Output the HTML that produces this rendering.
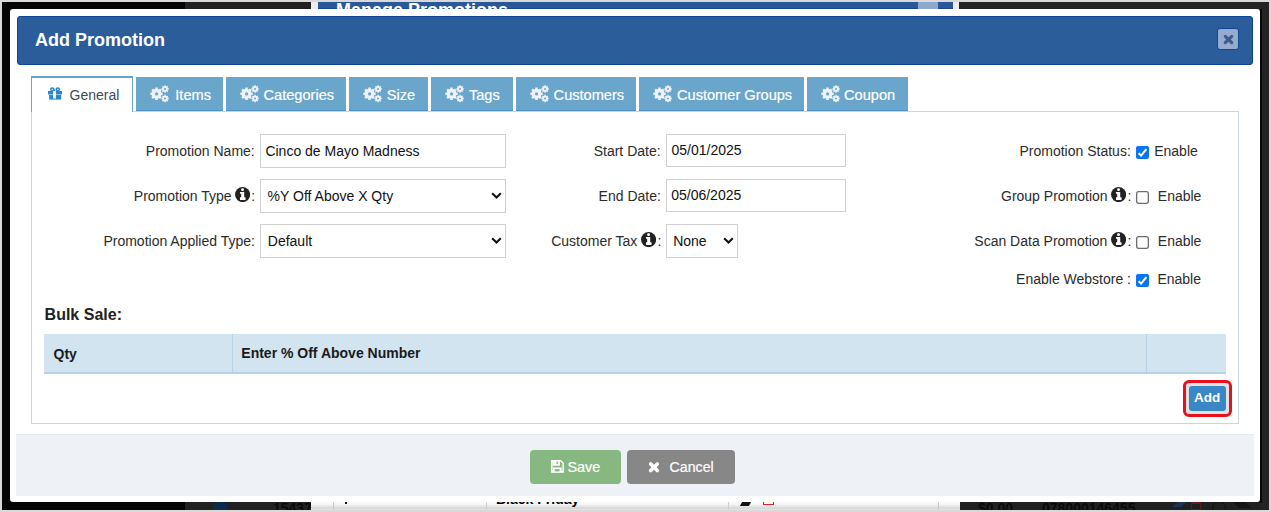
<!DOCTYPE html>
<html><head><meta charset="utf-8">
<style>
*{box-sizing:border-box;margin:0;padding:0}
html,body{width:1271px;height:512px;overflow:hidden}
body{background:#d9d9d9;font-family:"Liberation Sans",sans-serif;font-size:14px;color:#2b2b2b;position:relative}
.a{position:absolute}
.t{position:absolute;white-space:nowrap;line-height:1}
#bg{left:2px;top:2px;width:1267px;height:508px;background:#050505}
#modal{left:10px;top:9px;width:1250px;height:493px;background:#fff;border-radius:3px}
#hdr{left:17px;top:16px;width:1236px;height:49px;background:#2a5d9a;border:1px solid #0d4494;border-radius:3px}
#close{left:1217px;top:28px;width:22px;height:22px;background:#93acd0;border:1px solid #104892;border-radius:3px}
.tab{position:absolute;top:77px;height:34px;background:#6aa5cc;border-bottom:1px solid #4d90c8}
#gen{left:31px;top:76px;width:102px;height:36px;background:#fff;border:1px solid #68a4d4;border-top:2px solid #65a1d5;border-bottom:none}
#panel{left:31px;top:111px;width:1208px;height:313px;border:1px solid #c8d4e1}
.inp{position:absolute;height:34px;border:1px solid #d0d0d0;background:#fff}
#footer{left:16px;top:434px;width:1238px;height:62px;background:#eef1f6;border-top:1px solid #e3e8ef}
</style></head><body>
<div id="bg" class="a"></div>
<div class="a" style="left:185px;top:2px;width:126px;height:7px;background:#212121"></div>
<div class="a" style="left:959px;top:2px;width:310px;height:508px;background:#232323"></div>
<div class="a" style="left:1260px;top:9px;width:2px;height:494px;background:#080808"></div>
<div class="a" style="left:311px;top:2px;width:648px;height:7px;background:#ececec;overflow:hidden">
 <div class="a" style="left:7px;top:0;width:635px;height:7px;background:#28589a;border-bottom:1px solid #1b4a8c"></div>
 <div class="t" style="left:25px;top:-1px;font-size:18px;font-weight:bold;color:#fff">Manage Promotions</div>
 <div class="a" style="left:607px;top:0;width:20px;height:7px;background:#8fa9cc"></div>
</div>
<div class="a" style="left:185px;top:501px;width:126px;height:9px;background:#212121;overflow:hidden">
 <div class="a" style="left:28px;top:0;width:15px;height:15px;border-radius:50%;background:#0c2a4c"></div>
 <div class="t" style="left:88px;top:0px;font-weight:bold;color:#0a0a0a;font-size:14px">15437</div>
</div>
<div class="a" style="left:311px;top:501px;width:649px;height:9px;background:linear-gradient(#fdfdfd,#f4f4f4 40%,#d6d6d6 80%,#e6e6e6);overflow:hidden">
 <div class="a" style="left:22px;top:0;width:1px;height:9px;background:#c8c8c8"></div>
 <div class="a" style="left:175px;top:0;width:1px;height:9px;background:#d0d0d0"></div>
 <div class="a" style="left:417px;top:0;width:1px;height:9px;background:#d0d0d0"></div>
 <div class="a" style="left:627px;top:0;width:1px;height:9px;background:#c8c8c8"></div>
 <div class="a" style="left:34px;top:1px;width:2px;height:2px;background:#111"></div>
 <div class="t" style="left:185px;top:-9px;font-weight:bold;color:#000;font-size:14px">Black Friday</div>
 <div class="a" style="left:430px;top:1px;width:9px;height:4px;background:#111;transform:skewX(-30deg)"></div>
 <div class="a" style="left:452px;top:0;width:11px;height:4px;border:1.5px solid #d22;border-top:none"></div>
</div>
<div class="a" style="left:960px;top:501px;width:300px;height:9px;background:#202020;overflow:hidden">
 <div class="t" style="left:18px;top:0px;font-weight:bold;color:#0a0a0a;font-size:14px">$0.00</div>
 <div class="t" style="left:82px;top:0px;font-weight:bold;color:#0a0a0a;font-size:14px">078000146455</div>
 <div class="a" style="left:215px;top:1px;width:9px;height:5px;background:#1b3358;transform:skewX(-45deg)"></div>
 <div class="a" style="left:231px;top:1px;width:10px;height:8px;border:1.5px solid #5a1a1a;border-top:2px solid #6a1a1a"></div>
 <div class="a" style="left:252px;top:0px;width:14px;height:14px;border:1.5px solid #111;border-radius:50%"></div><div class="a" style="left:276px;top:1px;width:12px;height:6px;background:#151515;transform:skewX(45deg)"></div>
</div>
<div id="modal" class="a"></div>
<div id="hdr" class="a"></div>
<div id="close" class="a"></div>
<svg class="a" style="left:1223px;top:34px" width="11" height="11" viewBox="0 0 11 11"><path d="M2.3 2.3L8.7 8.7M8.7 2.3L2.3 8.7" stroke="#3d5d87" stroke-width="3.1" stroke-linecap="round"/></svg>

<div id="panel" class="a"></div>
<div id="gen" class="a"></div>
<svg class="a" style="left:47.8px;top:87px" width="15" height="13" viewBox="0 0 15 13"><g fill="#2c87d0"><rect x="0" y="4.0" width="14.1" height="3.4"/><rect x="1.1" y="7.8" width="12.1" height="4.8"/></g><rect x="5.1" y="4.0" width="2.8" height="7.5" fill="#fff"/><g fill="none" stroke="#2c87d0" stroke-width="1.5"><ellipse cx="4.3" cy="2.3" rx="1.6" ry="1.3"/><ellipse cx="9.8" cy="2.3" rx="1.6" ry="1.3"/></g><rect x="6" y="2.6" width="1.2" height="1.4" fill="#2c87d0"/></svg>
<div class="tab" style="left:136px;width:87px"></div><svg class="a" style="left:150px;top:85px" width="20" height="18" viewBox="0 0 20 18"><path fill="#eef2f6" fill-rule="evenodd" d="M11.33,7.52 L12.68,7.57 L12.68,10.03 L11.33,10.08 L10.82,11.31 L11.74,12.30 L10.00,14.04 L9.01,13.12 L7.78,13.63 L7.73,14.98 L5.27,14.98 L5.22,13.63 L3.99,13.12 L3.00,14.04 L1.26,12.30 L2.18,11.31 L1.67,10.08 L0.32,10.03 L0.32,7.57 L1.67,7.52 L2.18,6.29 L1.26,5.30 L3.00,3.56 L3.99,4.48 L5.22,3.97 L5.27,2.62 L7.73,2.62 L7.78,3.97 L9.01,4.48 L10.00,3.56 L11.74,5.30 L10.82,6.29ZM5.00,8.90a1.6,1.6 0 1,0 3.2,0a1.6,1.6 0 1,0 -3.2,0ZM17.90,3.26 L18.83,3.26 L18.83,4.74 L17.90,4.74 L17.61,5.46 L18.26,6.11 L17.21,7.16 L16.56,6.51 L15.84,6.80 L15.84,7.73 L14.36,7.73 L14.36,6.80 L13.64,6.51 L12.99,7.16 L11.94,6.11 L12.59,5.46 L12.30,4.74 L11.37,4.74 L11.37,3.26 L12.30,3.26 L12.59,2.54 L11.94,1.89 L12.99,0.84 L13.64,1.49 L14.36,1.20 L14.36,0.27 L15.84,0.27 L15.84,1.20 L16.56,1.49 L17.21,0.84 L18.26,1.89 L17.61,2.54ZM14.00,4.00a1.0,1.0 0 1,0 2.0,0a1.0,1.0 0 1,0 -2.0,0ZM17.90,12.86 L18.83,12.86 L18.83,14.34 L17.90,14.34 L17.61,15.06 L18.26,15.71 L17.21,16.76 L16.56,16.11 L15.84,16.40 L15.84,17.33 L14.36,17.33 L14.36,16.40 L13.64,16.11 L12.99,16.76 L11.94,15.71 L12.59,15.06 L12.30,14.34 L11.37,14.34 L11.37,12.86 L12.30,12.86 L12.59,12.14 L11.94,11.49 L12.99,10.44 L13.64,11.09 L14.36,10.80 L14.36,9.87 L15.84,9.87 L15.84,10.80 L16.56,11.09 L17.21,10.44 L18.26,11.49 L17.61,12.14ZM14.00,13.60a1.0,1.0 0 1,0 2.0,0a1.0,1.0 0 1,0 -2.0,0Z"/></svg><div class="tab" style="left:226px;width:120px"></div><svg class="a" style="left:240px;top:85px" width="20" height="18" viewBox="0 0 20 18"><path fill="#eef2f6" fill-rule="evenodd" d="M11.33,7.52 L12.68,7.57 L12.68,10.03 L11.33,10.08 L10.82,11.31 L11.74,12.30 L10.00,14.04 L9.01,13.12 L7.78,13.63 L7.73,14.98 L5.27,14.98 L5.22,13.63 L3.99,13.12 L3.00,14.04 L1.26,12.30 L2.18,11.31 L1.67,10.08 L0.32,10.03 L0.32,7.57 L1.67,7.52 L2.18,6.29 L1.26,5.30 L3.00,3.56 L3.99,4.48 L5.22,3.97 L5.27,2.62 L7.73,2.62 L7.78,3.97 L9.01,4.48 L10.00,3.56 L11.74,5.30 L10.82,6.29ZM5.00,8.90a1.6,1.6 0 1,0 3.2,0a1.6,1.6 0 1,0 -3.2,0ZM17.90,3.26 L18.83,3.26 L18.83,4.74 L17.90,4.74 L17.61,5.46 L18.26,6.11 L17.21,7.16 L16.56,6.51 L15.84,6.80 L15.84,7.73 L14.36,7.73 L14.36,6.80 L13.64,6.51 L12.99,7.16 L11.94,6.11 L12.59,5.46 L12.30,4.74 L11.37,4.74 L11.37,3.26 L12.30,3.26 L12.59,2.54 L11.94,1.89 L12.99,0.84 L13.64,1.49 L14.36,1.20 L14.36,0.27 L15.84,0.27 L15.84,1.20 L16.56,1.49 L17.21,0.84 L18.26,1.89 L17.61,2.54ZM14.00,4.00a1.0,1.0 0 1,0 2.0,0a1.0,1.0 0 1,0 -2.0,0ZM17.90,12.86 L18.83,12.86 L18.83,14.34 L17.90,14.34 L17.61,15.06 L18.26,15.71 L17.21,16.76 L16.56,16.11 L15.84,16.40 L15.84,17.33 L14.36,17.33 L14.36,16.40 L13.64,16.11 L12.99,16.76 L11.94,15.71 L12.59,15.06 L12.30,14.34 L11.37,14.34 L11.37,12.86 L12.30,12.86 L12.59,12.14 L11.94,11.49 L12.99,10.44 L13.64,11.09 L14.36,10.80 L14.36,9.87 L15.84,9.87 L15.84,10.80 L16.56,11.09 L17.21,10.44 L18.26,11.49 L17.61,12.14ZM14.00,13.60a1.0,1.0 0 1,0 2.0,0a1.0,1.0 0 1,0 -2.0,0Z"/></svg><div class="tab" style="left:349px;width:79px"></div><svg class="a" style="left:363px;top:85px" width="20" height="18" viewBox="0 0 20 18"><path fill="#eef2f6" fill-rule="evenodd" d="M11.33,7.52 L12.68,7.57 L12.68,10.03 L11.33,10.08 L10.82,11.31 L11.74,12.30 L10.00,14.04 L9.01,13.12 L7.78,13.63 L7.73,14.98 L5.27,14.98 L5.22,13.63 L3.99,13.12 L3.00,14.04 L1.26,12.30 L2.18,11.31 L1.67,10.08 L0.32,10.03 L0.32,7.57 L1.67,7.52 L2.18,6.29 L1.26,5.30 L3.00,3.56 L3.99,4.48 L5.22,3.97 L5.27,2.62 L7.73,2.62 L7.78,3.97 L9.01,4.48 L10.00,3.56 L11.74,5.30 L10.82,6.29ZM5.00,8.90a1.6,1.6 0 1,0 3.2,0a1.6,1.6 0 1,0 -3.2,0ZM17.90,3.26 L18.83,3.26 L18.83,4.74 L17.90,4.74 L17.61,5.46 L18.26,6.11 L17.21,7.16 L16.56,6.51 L15.84,6.80 L15.84,7.73 L14.36,7.73 L14.36,6.80 L13.64,6.51 L12.99,7.16 L11.94,6.11 L12.59,5.46 L12.30,4.74 L11.37,4.74 L11.37,3.26 L12.30,3.26 L12.59,2.54 L11.94,1.89 L12.99,0.84 L13.64,1.49 L14.36,1.20 L14.36,0.27 L15.84,0.27 L15.84,1.20 L16.56,1.49 L17.21,0.84 L18.26,1.89 L17.61,2.54ZM14.00,4.00a1.0,1.0 0 1,0 2.0,0a1.0,1.0 0 1,0 -2.0,0ZM17.90,12.86 L18.83,12.86 L18.83,14.34 L17.90,14.34 L17.61,15.06 L18.26,15.71 L17.21,16.76 L16.56,16.11 L15.84,16.40 L15.84,17.33 L14.36,17.33 L14.36,16.40 L13.64,16.11 L12.99,16.76 L11.94,15.71 L12.59,15.06 L12.30,14.34 L11.37,14.34 L11.37,12.86 L12.30,12.86 L12.59,12.14 L11.94,11.49 L12.99,10.44 L13.64,11.09 L14.36,10.80 L14.36,9.87 L15.84,9.87 L15.84,10.80 L16.56,11.09 L17.21,10.44 L18.26,11.49 L17.61,12.14ZM14.00,13.60a1.0,1.0 0 1,0 2.0,0a1.0,1.0 0 1,0 -2.0,0Z"/></svg><div class="tab" style="left:431px;width:82px"></div><svg class="a" style="left:445px;top:85px" width="20" height="18" viewBox="0 0 20 18"><path fill="#eef2f6" fill-rule="evenodd" d="M11.33,7.52 L12.68,7.57 L12.68,10.03 L11.33,10.08 L10.82,11.31 L11.74,12.30 L10.00,14.04 L9.01,13.12 L7.78,13.63 L7.73,14.98 L5.27,14.98 L5.22,13.63 L3.99,13.12 L3.00,14.04 L1.26,12.30 L2.18,11.31 L1.67,10.08 L0.32,10.03 L0.32,7.57 L1.67,7.52 L2.18,6.29 L1.26,5.30 L3.00,3.56 L3.99,4.48 L5.22,3.97 L5.27,2.62 L7.73,2.62 L7.78,3.97 L9.01,4.48 L10.00,3.56 L11.74,5.30 L10.82,6.29ZM5.00,8.90a1.6,1.6 0 1,0 3.2,0a1.6,1.6 0 1,0 -3.2,0ZM17.90,3.26 L18.83,3.26 L18.83,4.74 L17.90,4.74 L17.61,5.46 L18.26,6.11 L17.21,7.16 L16.56,6.51 L15.84,6.80 L15.84,7.73 L14.36,7.73 L14.36,6.80 L13.64,6.51 L12.99,7.16 L11.94,6.11 L12.59,5.46 L12.30,4.74 L11.37,4.74 L11.37,3.26 L12.30,3.26 L12.59,2.54 L11.94,1.89 L12.99,0.84 L13.64,1.49 L14.36,1.20 L14.36,0.27 L15.84,0.27 L15.84,1.20 L16.56,1.49 L17.21,0.84 L18.26,1.89 L17.61,2.54ZM14.00,4.00a1.0,1.0 0 1,0 2.0,0a1.0,1.0 0 1,0 -2.0,0ZM17.90,12.86 L18.83,12.86 L18.83,14.34 L17.90,14.34 L17.61,15.06 L18.26,15.71 L17.21,16.76 L16.56,16.11 L15.84,16.40 L15.84,17.33 L14.36,17.33 L14.36,16.40 L13.64,16.11 L12.99,16.76 L11.94,15.71 L12.59,15.06 L12.30,14.34 L11.37,14.34 L11.37,12.86 L12.30,12.86 L12.59,12.14 L11.94,11.49 L12.99,10.44 L13.64,11.09 L14.36,10.80 L14.36,9.87 L15.84,9.87 L15.84,10.80 L16.56,11.09 L17.21,10.44 L18.26,11.49 L17.61,12.14ZM14.00,13.60a1.0,1.0 0 1,0 2.0,0a1.0,1.0 0 1,0 -2.0,0Z"/></svg><div class="tab" style="left:516px;width:120px"></div><svg class="a" style="left:530px;top:85px" width="20" height="18" viewBox="0 0 20 18"><path fill="#eef2f6" fill-rule="evenodd" d="M11.33,7.52 L12.68,7.57 L12.68,10.03 L11.33,10.08 L10.82,11.31 L11.74,12.30 L10.00,14.04 L9.01,13.12 L7.78,13.63 L7.73,14.98 L5.27,14.98 L5.22,13.63 L3.99,13.12 L3.00,14.04 L1.26,12.30 L2.18,11.31 L1.67,10.08 L0.32,10.03 L0.32,7.57 L1.67,7.52 L2.18,6.29 L1.26,5.30 L3.00,3.56 L3.99,4.48 L5.22,3.97 L5.27,2.62 L7.73,2.62 L7.78,3.97 L9.01,4.48 L10.00,3.56 L11.74,5.30 L10.82,6.29ZM5.00,8.90a1.6,1.6 0 1,0 3.2,0a1.6,1.6 0 1,0 -3.2,0ZM17.90,3.26 L18.83,3.26 L18.83,4.74 L17.90,4.74 L17.61,5.46 L18.26,6.11 L17.21,7.16 L16.56,6.51 L15.84,6.80 L15.84,7.73 L14.36,7.73 L14.36,6.80 L13.64,6.51 L12.99,7.16 L11.94,6.11 L12.59,5.46 L12.30,4.74 L11.37,4.74 L11.37,3.26 L12.30,3.26 L12.59,2.54 L11.94,1.89 L12.99,0.84 L13.64,1.49 L14.36,1.20 L14.36,0.27 L15.84,0.27 L15.84,1.20 L16.56,1.49 L17.21,0.84 L18.26,1.89 L17.61,2.54ZM14.00,4.00a1.0,1.0 0 1,0 2.0,0a1.0,1.0 0 1,0 -2.0,0ZM17.90,12.86 L18.83,12.86 L18.83,14.34 L17.90,14.34 L17.61,15.06 L18.26,15.71 L17.21,16.76 L16.56,16.11 L15.84,16.40 L15.84,17.33 L14.36,17.33 L14.36,16.40 L13.64,16.11 L12.99,16.76 L11.94,15.71 L12.59,15.06 L12.30,14.34 L11.37,14.34 L11.37,12.86 L12.30,12.86 L12.59,12.14 L11.94,11.49 L12.99,10.44 L13.64,11.09 L14.36,10.80 L14.36,9.87 L15.84,9.87 L15.84,10.80 L16.56,11.09 L17.21,10.44 L18.26,11.49 L17.61,12.14ZM14.00,13.60a1.0,1.0 0 1,0 2.0,0a1.0,1.0 0 1,0 -2.0,0Z"/></svg><div class="tab" style="left:639px;width:165px"></div><svg class="a" style="left:653px;top:85px" width="20" height="18" viewBox="0 0 20 18"><path fill="#eef2f6" fill-rule="evenodd" d="M11.33,7.52 L12.68,7.57 L12.68,10.03 L11.33,10.08 L10.82,11.31 L11.74,12.30 L10.00,14.04 L9.01,13.12 L7.78,13.63 L7.73,14.98 L5.27,14.98 L5.22,13.63 L3.99,13.12 L3.00,14.04 L1.26,12.30 L2.18,11.31 L1.67,10.08 L0.32,10.03 L0.32,7.57 L1.67,7.52 L2.18,6.29 L1.26,5.30 L3.00,3.56 L3.99,4.48 L5.22,3.97 L5.27,2.62 L7.73,2.62 L7.78,3.97 L9.01,4.48 L10.00,3.56 L11.74,5.30 L10.82,6.29ZM5.00,8.90a1.6,1.6 0 1,0 3.2,0a1.6,1.6 0 1,0 -3.2,0ZM17.90,3.26 L18.83,3.26 L18.83,4.74 L17.90,4.74 L17.61,5.46 L18.26,6.11 L17.21,7.16 L16.56,6.51 L15.84,6.80 L15.84,7.73 L14.36,7.73 L14.36,6.80 L13.64,6.51 L12.99,7.16 L11.94,6.11 L12.59,5.46 L12.30,4.74 L11.37,4.74 L11.37,3.26 L12.30,3.26 L12.59,2.54 L11.94,1.89 L12.99,0.84 L13.64,1.49 L14.36,1.20 L14.36,0.27 L15.84,0.27 L15.84,1.20 L16.56,1.49 L17.21,0.84 L18.26,1.89 L17.61,2.54ZM14.00,4.00a1.0,1.0 0 1,0 2.0,0a1.0,1.0 0 1,0 -2.0,0ZM17.90,12.86 L18.83,12.86 L18.83,14.34 L17.90,14.34 L17.61,15.06 L18.26,15.71 L17.21,16.76 L16.56,16.11 L15.84,16.40 L15.84,17.33 L14.36,17.33 L14.36,16.40 L13.64,16.11 L12.99,16.76 L11.94,15.71 L12.59,15.06 L12.30,14.34 L11.37,14.34 L11.37,12.86 L12.30,12.86 L12.59,12.14 L11.94,11.49 L12.99,10.44 L13.64,11.09 L14.36,10.80 L14.36,9.87 L15.84,9.87 L15.84,10.80 L16.56,11.09 L17.21,10.44 L18.26,11.49 L17.61,12.14ZM14.00,13.60a1.0,1.0 0 1,0 2.0,0a1.0,1.0 0 1,0 -2.0,0Z"/></svg><div class="tab" style="left:807px;width:101px"></div><svg class="a" style="left:821px;top:85px" width="20" height="18" viewBox="0 0 20 18"><path fill="#eef2f6" fill-rule="evenodd" d="M11.33,7.52 L12.68,7.57 L12.68,10.03 L11.33,10.08 L10.82,11.31 L11.74,12.30 L10.00,14.04 L9.01,13.12 L7.78,13.63 L7.73,14.98 L5.27,14.98 L5.22,13.63 L3.99,13.12 L3.00,14.04 L1.26,12.30 L2.18,11.31 L1.67,10.08 L0.32,10.03 L0.32,7.57 L1.67,7.52 L2.18,6.29 L1.26,5.30 L3.00,3.56 L3.99,4.48 L5.22,3.97 L5.27,2.62 L7.73,2.62 L7.78,3.97 L9.01,4.48 L10.00,3.56 L11.74,5.30 L10.82,6.29ZM5.00,8.90a1.6,1.6 0 1,0 3.2,0a1.6,1.6 0 1,0 -3.2,0ZM17.90,3.26 L18.83,3.26 L18.83,4.74 L17.90,4.74 L17.61,5.46 L18.26,6.11 L17.21,7.16 L16.56,6.51 L15.84,6.80 L15.84,7.73 L14.36,7.73 L14.36,6.80 L13.64,6.51 L12.99,7.16 L11.94,6.11 L12.59,5.46 L12.30,4.74 L11.37,4.74 L11.37,3.26 L12.30,3.26 L12.59,2.54 L11.94,1.89 L12.99,0.84 L13.64,1.49 L14.36,1.20 L14.36,0.27 L15.84,0.27 L15.84,1.20 L16.56,1.49 L17.21,0.84 L18.26,1.89 L17.61,2.54ZM14.00,4.00a1.0,1.0 0 1,0 2.0,0a1.0,1.0 0 1,0 -2.0,0ZM17.90,12.86 L18.83,12.86 L18.83,14.34 L17.90,14.34 L17.61,15.06 L18.26,15.71 L17.21,16.76 L16.56,16.11 L15.84,16.40 L15.84,17.33 L14.36,17.33 L14.36,16.40 L13.64,16.11 L12.99,16.76 L11.94,15.71 L12.59,15.06 L12.30,14.34 L11.37,14.34 L11.37,12.86 L12.30,12.86 L12.59,12.14 L11.94,11.49 L12.99,10.44 L13.64,11.09 L14.36,10.80 L14.36,9.87 L15.84,9.87 L15.84,10.80 L16.56,11.09 L17.21,10.44 L18.26,11.49 L17.61,12.14ZM14.00,13.60a1.0,1.0 0 1,0 2.0,0a1.0,1.0 0 1,0 -2.0,0Z"/></svg>

<div class="inp" style="left:260px;top:134px;width:246px"></div>
<div class="inp" style="left:260px;top:179px;width:246px"></div>
<svg class="a" style="left:490.5px;top:192.3px" width="11" height="8" viewBox="0 0 11 8"><path d="M1.2 1.2L5.5 5.5L9.8 1.2" fill="none" stroke="#111" stroke-width="2.1"/></svg>
<div class="inp" style="left:260px;top:224px;width:246px"></div>
<svg class="a" style="left:490.5px;top:237.3px" width="11" height="8" viewBox="0 0 11 8"><path d="M1.2 1.2L5.5 5.5L9.8 1.2" fill="none" stroke="#111" stroke-width="2.1"/></svg>
<svg class="a" style="left:234.6px;top:186.9px" width="15.2" height="15.2" viewBox="0 0 15 15"><circle cx="7.5" cy="7.5" r="7.45" fill="#222"/><circle cx="7.45" cy="2.6" r="1.45" fill="#fff"/><path fill="#fff" d="M4.9 5H9.1V10.2H10.4V12.9H4.9V10.2H6.1V6.7H4.9Z"/></svg>
<div class="inp" style="left:666px;top:134px;width:180px;height:33px"></div>
<div class="inp" style="left:666px;top:179px;width:180px;height:33px"></div>
<div class="inp" style="left:666px;top:224px;width:72px"></div>
<svg class="a" style="left:722.5px;top:237.3px" width="11" height="8" viewBox="0 0 11 8"><path d="M1.2 1.2L5.5 5.5L9.8 1.2" fill="none" stroke="#111" stroke-width="2.1"/></svg>
<svg class="a" style="left:640.7px;top:231.9px" width="15.2" height="15.2" viewBox="0 0 15 15"><circle cx="7.5" cy="7.5" r="7.45" fill="#222"/><circle cx="7.45" cy="2.6" r="1.45" fill="#fff"/><path fill="#fff" d="M4.9 5H9.1V10.2H10.4V12.9H4.9V10.2H6.1V6.7H4.9Z"/></svg>
<svg class="a" style="left:1136px;top:146px" width="13" height="13" viewBox="0 0 13 13"><rect x="0" y="0" width="13" height="13" rx="2" fill="#0a75f2"/><path d="M2.6 7.2L5.1 9.6L10.4 3.2" fill="none" stroke="#fff" stroke-width="2"/></svg>
<svg class="a" style="left:1136px;top:191px" width="13" height="13" viewBox="0 0 13 13"><rect x="0.65" y="0.65" width="11.7" height="11.7" rx="2" fill="#fff" stroke="#6e6e6e" stroke-width="1.3"/></svg>
<svg class="a" style="left:1111px;top:186.9px" width="15.2" height="15.2" viewBox="0 0 15 15"><circle cx="7.5" cy="7.5" r="7.45" fill="#222"/><circle cx="7.45" cy="2.6" r="1.45" fill="#fff"/><path fill="#fff" d="M4.9 5H9.1V10.2H10.4V12.9H4.9V10.2H6.1V6.7H4.9Z"/></svg>
<svg class="a" style="left:1136px;top:236px" width="13" height="13" viewBox="0 0 13 13"><rect x="0.65" y="0.65" width="11.7" height="11.7" rx="2" fill="#fff" stroke="#6e6e6e" stroke-width="1.3"/></svg>
<svg class="a" style="left:1111.2px;top:231.9px" width="15.2" height="15.2" viewBox="0 0 15 15"><circle cx="7.5" cy="7.5" r="7.45" fill="#222"/><circle cx="7.45" cy="2.6" r="1.45" fill="#fff"/><path fill="#fff" d="M4.9 5H9.1V10.2H10.4V12.9H4.9V10.2H6.1V6.7H4.9Z"/></svg>
<svg class="a" style="left:1136px;top:274px" width="13" height="13" viewBox="0 0 13 13"><rect x="0" y="0" width="13" height="13" rx="2" fill="#0a75f2"/><path d="M2.6 7.2L5.1 9.6L10.4 3.2" fill="none" stroke="#fff" stroke-width="2"/></svg>

<div class="a" style="left:44px;top:334px;width:1182px;height:40px;background:#d1e4f0;border-bottom:2px solid #b6d2e6"></div>
<div class="a" style="left:232px;top:334px;width:1px;height:38px;background:#b8d3e6"></div>
<div class="a" style="left:1146px;top:334px;width:1px;height:38px;background:#b8d3e6"></div>

<div class="a" style="left:1183px;top:380px;width:49px;height:37px;border:3px solid #e8101a;border-radius:6px;background:#dfe3e6"></div>
<div class="a" style="left:1189px;top:386px;width:37px;height:25px;background:#3b86c6;border-radius:3px"></div>

<div id="footer" class="a"></div>
<div class="a" style="left:530px;top:450px;width:91px;height:34px;background:#87b881;border-radius:4px"></div>
<svg class="a" style="left:551px;top:460px" width="13" height="13" viewBox="0 0 13 13"><path d="M0.8 0.8H9.7L12.2 3.3V11.9H0.8Z" fill="none" stroke="#fff" stroke-width="1.6"/><rect x="1.6" y="0.4" width="7.3" height="5.3" fill="#fff"/><rect x="5.4" y="1.6" width="1.8" height="2.3" fill="#87b881"/><rect x="1.7" y="7.4" width="8.9" height="5" fill="#fff"/><rect x="3.7" y="9.1" width="4.9" height="2.3" fill="#87b881"/></svg>
<div class="a" style="left:627px;top:450px;width:108px;height:34px;background:#878787;border-radius:4px"></div>
<svg class="a" style="left:648px;top:461px" width="12" height="12" viewBox="0 0 12 12"><path d="M2.7 2.9L9.3 9.5M9.3 2.9L2.7 9.5" stroke="#fff" stroke-width="3.6" stroke-linecap="round"/></svg>
<div class="t" style="left:35px;top:31px;font-size:18px;font-weight:bold;color:#fff">Add Promotion</div><div class="t" style="left:69.5px;top:88px;color:#3b4a5c">General</div><div class="t" style="left:175.3px;top:88px;color:#fff;font-size:14.6px;-webkit-text-stroke:0.2px #fff">Items</div><div class="t" style="left:263.5px;top:88px;color:#fff;font-size:14.6px;-webkit-text-stroke:0.2px #fff">Categories</div><div class="t" style="left:386.7px;top:88px;color:#fff;font-size:14.6px;-webkit-text-stroke:0.2px #fff">Size</div><div class="t" style="left:468.9px;top:88px;color:#fff;font-size:14.6px;-webkit-text-stroke:0.2px #fff">Tags</div><div class="t" style="left:553.6px;top:88px;color:#fff;font-size:14.6px;-webkit-text-stroke:0.2px #fff">Customers</div><div class="t" style="left:677px;top:88px;color:#fff;font-size:14.6px;-webkit-text-stroke:0.2px #fff">Customer Groups</div><div class="t" style="left:844px;top:88px;color:#fff;font-size:14.6px;-webkit-text-stroke:0.2px #fff">Coupon</div><div class="t" style="left:145.8px;top:144px;">Promotion Name:</div><div class="t" style="left:133.8px;top:189px;">Promotion Type</div><div class="t" style="left:251.2px;top:189px;">:</div><div class="t" style="left:103.4px;top:234px;">Promotion Applied Type:</div><div class="t" style="left:265.4px;top:144px;color:#111">Cinco de Mayo Madness</div><div class="t" style="left:267.6px;top:189px;color:#111">%Y Off Above X Qty</div><div class="t" style="left:267.8px;top:234px;color:#111">Default</div><div class="t" style="left:593.7px;top:144px;">Start Date:</div><div class="t" style="left:598.6px;top:189px;">End Date:</div><div class="t" style="left:551.2px;top:234px;">Customer Tax</div><div class="t" style="left:657.6px;top:234px;">:</div><div class="t" style="left:671.5px;top:143px;color:#111">05/01/2025</div><div class="t" style="left:671.2px;top:188px;color:#111">05/06/2025</div><div class="t" style="left:673.2px;top:234px;color:#111">None</div><div class="t" style="left:1019.5px;top:144px;">Promotion Status:</div><div class="t" style="left:1154.2px;top:144px;">Enable</div><div class="t" style="left:1001.0px;top:189px;">Group Promotion</div><div class="t" style="left:1127.5px;top:189px;">:</div><div class="t" style="left:1157.8px;top:189px;">Enable</div><div class="t" style="left:974.3px;top:234px;">Scan Data Promotion</div><div class="t" style="left:1127.5px;top:234px;">:</div><div class="t" style="left:1157.8px;top:234px;">Enable</div><div class="t" style="left:1016.1px;top:272px;">Enable Webstore :</div><div class="t" style="left:1157.4px;top:272px;">Enable</div><div class="t" style="left:44.6px;top:307px;font-size:16px;font-weight:bold;color:#222">Bulk Sale:</div><div class="t" style="left:53.5px;top:347px;font-weight:bold;color:#1a1a1a">Qty</div><div class="t" style="left:241.3px;top:346px;font-weight:bold;color:#1a1a1a">Enter % Off Above Number</div><div class="t" style="left:1194.1000000000001px;top:391px;color:#fff;font-size:13.5px;font-weight:bold">Add</div><div class="t" style="left:567.4px;top:460px;color:#fff;font-size:14.4px;-webkit-text-stroke:0.2px #fff">Save</div><div class="t" style="left:669.6px;top:460px;color:#fff;font-size:14.2px;-webkit-text-stroke:0.2px #fff">Cancel</div>
</body></html>
